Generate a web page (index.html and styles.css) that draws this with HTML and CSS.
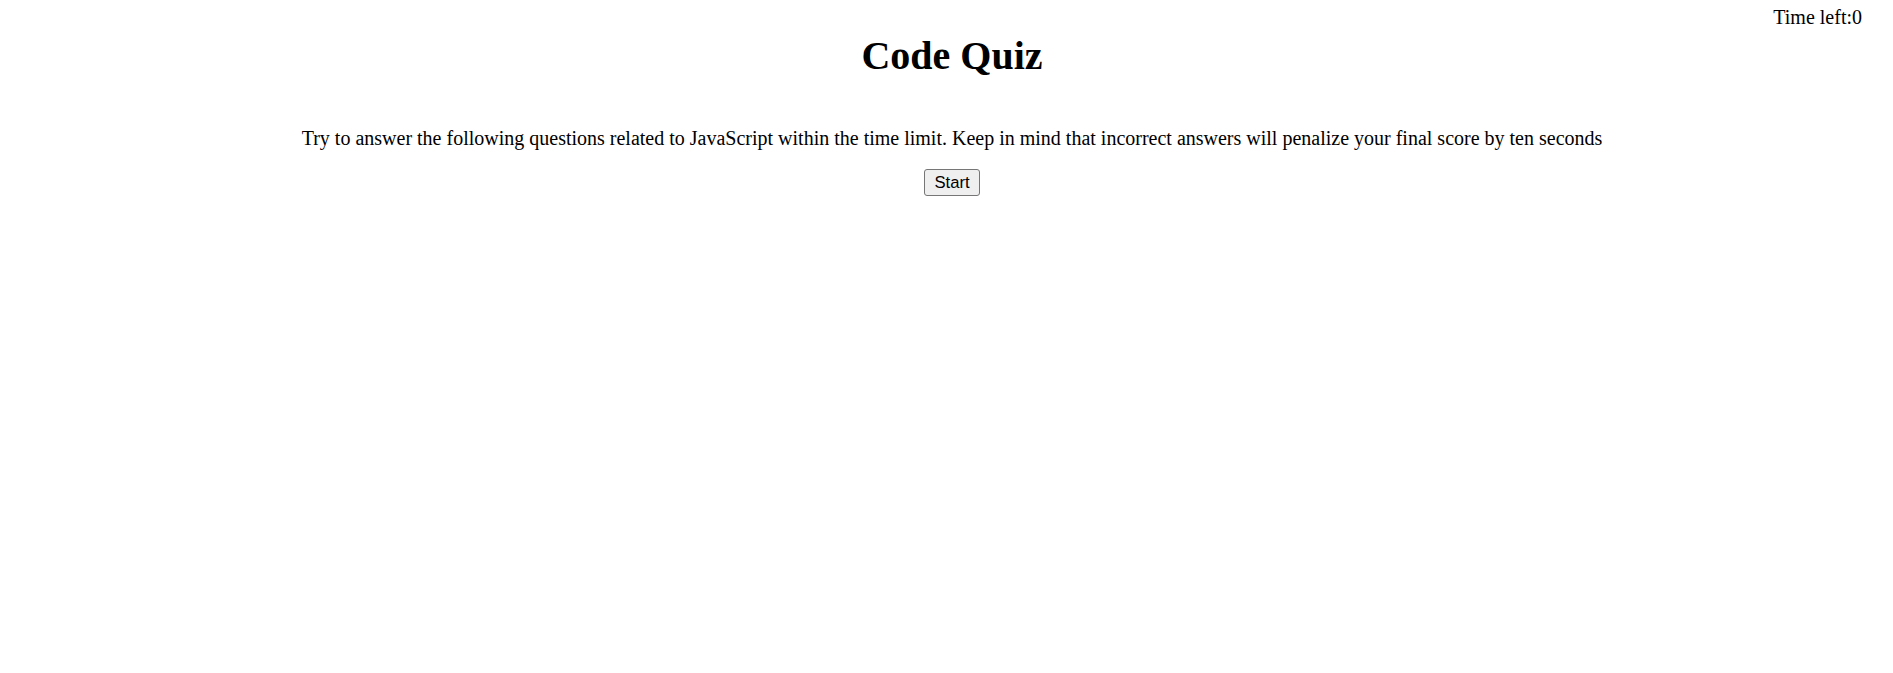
FILE: index.html
```html
<!DOCTYPE html>
<html>
<head>
<meta charset="utf-8">
<link rel="stylesheet" href="styles.css">
</head>
<body>
<header class="top">
  <div class="timer">Time left:<span>0</span></div>
</header>
<main class="intro">
  <h1 class="title">Code Quiz</h1>
  <p class="lead">Try to answer the following questions related to JavaScript within the time limit. Keep in mind that incorrect answers will penalize your final score by ten seconds</p>
  <button class="start">Start</button>
</main>
</body>
</html>
```
FILE: styles.css
```css
html, body {
  margin: 0;
  padding: 0;
  background: #fff;
}
body {
  font-family: "Liberation Serif", "Times New Roman", serif;
  font-size: 20px;
  line-height: 23px;
  color: #000;
}
.top {
  display: flex;
  justify-content: flex-end;
  padding: 6px 31px 0 0;
}
.timer {
  line-height: 23px;
}
.intro {
  display: flex;
  flex-direction: column;
  align-items: center;
  text-align: center;
  padding-left: 11px;
}
.title {
  font-size: 40px;
  line-height: 46px;
  font-weight: bold;
  margin: 4px 0 0;
}
.lead {
  margin: 48px 0 0;
  line-height: 23px;
}
.start {
  margin-top: 19px;
  font-family: "Liberation Sans", Arial, sans-serif;
  font-size: 16.67px;
  line-height: 19px;
  padding: 3px 9px;
  border: 1px solid #767676;
  border-radius: 3px;
  background: #efefef;
  color: #000;
}
```
